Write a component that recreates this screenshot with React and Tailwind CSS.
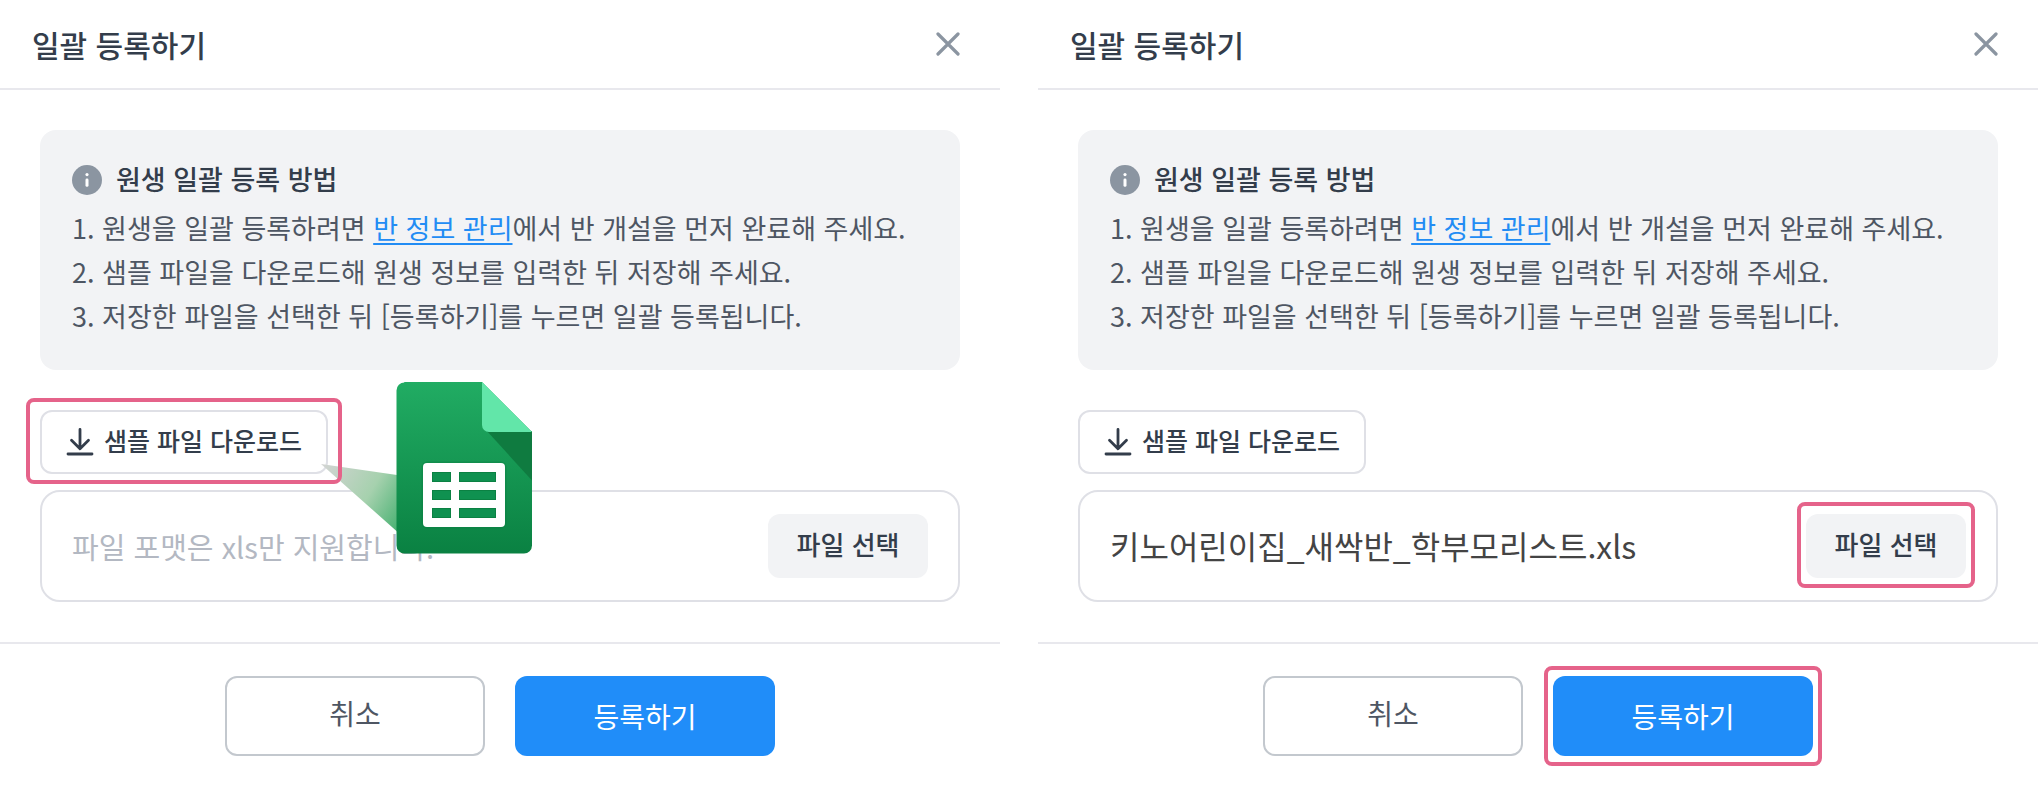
import { useState } from 'react';

const CloseIcon = () => (
    <svg width="24" height="24" viewBox="0 0 24 24" fill="none" stroke="#8b95a1" strokeWidth="3.2" strokeLinecap="round">
        <path d="M2 2l20 20M22 2L2 22" />
    </svg>
)

const InfoIcon = () => (
    <svg width="30" height="30" viewBox="0 0 30 30" className="shrink-0">
        <circle cx="15" cy="15" r="15" fill="#8b95a1" />
        <circle cx="15" cy="9.6" r="1.6" fill="#fff" />
        <rect x="13.5" y="13.6" width="3" height="8.2" rx="1.4" fill="#fff" />
    </svg>
)

const DownloadIcon = () => (
    <svg width="28" height="28" viewBox="0 0 28 28" fill="none" stroke="#333d4b" strokeWidth="2.8" strokeLinecap="round" strokeLinejoin="round">
        <path d="M14 1.5v19M5.5 12.2l8.500 8.600 8.500-8.600M2 26h24" />
    </svg>
)

// google sheets file with the pointer that grows out of the download button
const SheetsCallout = () => (
    <svg width="212" height="172" viewBox="0 0 212 172" className="absolute -top-7 left-[280px] pointer-events-none">
        <defs>
            <linearGradient id="pointer" x1="0" y1="82" x2="90" y2="136" gradientUnits="userSpaceOnUse">
                <stop offset="0" stopColor="#d4d4d4" />
                <stop offset="0.55" stopColor="#a6d1ae" />
                <stop offset="1" stopColor="#3fae6c" />
            </linearGradient>
            <linearGradient id="page" x1="0" y1="0" x2="0" y2="1">
                <stop offset="0" stopColor="#21ac63" />
                <stop offset="1" stopColor="#0a8142" />
            </linearGradient>
        </defs>
        <path d="M1 82L77 93V149.500Z" fill="url(#pointer)" />
        <path d="M84 0H162L212 50V163.500a8 8 0 0 1-8 8H84.500a8 8 0 0 1-8-8V8.500a8 8 0 0 1 8-8Z" fill="url(#page)" />
        <path d="M166 48L212 49V98.500Z" fill="#0f7b40" />
        <path d="M162 0L212 50H169a7 7 0 0 1-7-7Z" fill="#62e6a9" />
        <rect x="101.500" y="79.500" width="85" height="67" rx="6" fill="#0a7a40" opacity="0.35" />
        <rect x="103" y="81" width="82" height="64" rx="4" fill="#fff" />
        <g fill="#0f9150" stroke="#0b8143" strokeWidth="1">
            <rect x="112.500" y="90.500" width="18" height="9" />
            <rect x="139.500" y="90.500" width="36" height="9" />
            <rect x="112.500" y="108.500" width="18" height="9" />
            <rect x="139.500" y="108.500" width="36" height="9" />
            <rect x="112.500" y="126.500" width="18" height="9" />
            <rect x="139.500" y="126.500" width="36" height="9" />
        </g>
    </svg>
)

const Highlight = ({ className }) => (
    <span className={`absolute rounded-lg border-4 border-[#e5638a] pointer-events-none ${className}`}></span>
)

const RegisterModal = ({ defaultFile, step }) => {
    const [fileName, setFileName] = useState(defaultFile)

    return (
        <section className="flex flex-col bg-white">
            <header className="flex items-center justify-between h-[90px] pl-8 pr-10 border-b-2 border-[#e8e8ed]">
                <h2 className="text-[30px] leading-10 font-medium text-[#333d4b]">일괄 등록하기</h2>
                <button type="button" aria-label="닫기"><CloseIcon /></button>
            </header>

            <div className="flex flex-col px-10 py-10">
                <div className="min-h-60 rounded-2xl bg-[#f2f3f5] px-8 py-7 text-[27px] leading-[44px]">
                    <div className="flex items-center gap-[14px] h-11">
                        <InfoIcon />
                        <h3 className="pb-0.5 font-medium text-[#333d4b]">원생 일괄 등록 방법</h3>
                    </div>
                    <ol className="pt-1 text-[#4e5663]">
                        <li>1. 원생을 일괄 등록하려면 <a href="#" className="text-[#228cf4] underline decoration-2 underline-offset-4">반 정보 관리</a>에서 반 개설을 먼저 완료해 주세요.</li>
                        <li>2. 샘플 파일을 다운로드해 원생 정보를 입력한 뒤 저장해 주세요.</li>
                        <li>3. 저장한 파일을 선택한 뒤 [등록하기]를 누르면 일괄 등록됩니다.</li>
                    </ol>
                </div>

                <div className="relative z-10 mt-10 self-start">
                    <button type="button" className="flex items-center gap-[10px] h-16 w-72 pl-6 rounded-xl border-2 border-[#dfe0e6] text-[25px] font-medium text-[#333d4b] whitespace-nowrap">
                        <DownloadIcon />
                        <span className="pb-0.5">샘플 파일 다운로드</span>
                    </button>
                    {step === 1 && <SheetsCallout />}
                    {step === 1 && <Highlight className="-inset-x-[14px] -top-3 -bottom-[10px]" />}
                </div>

                <div className="mt-4 flex items-center h-28 px-[30px] rounded-[20px] border-2 border-[#dfe0e6]">
                    <input
                        type="text"
                        aria-label="파일 이름"
                        value={fileName}
                        onChange={(e) => setFileName(e.target.value)}
                        placeholder="파일 포맷은 xls만 지원합니다."
                        className="flex-1 min-w-0 h-14 pb-0.5 outline-none text-[32px] text-[#444444] placeholder:text-[29px] placeholder:text-[#b3b8c2]"
                    />
                    <div className="relative flex">
                        <button type="button" className="h-16 w-40 pb-1.5 rounded-xl bg-[#f2f3f5] text-[26px] font-medium text-[#333d4b]">파일 선택</button>
                        {step === 2 && <Highlight className="-inset-x-[9px] -top-3 -bottom-[10px]" />}
                    </div>
                </div>
            </div>

            <footer className="flex justify-center gap-[30px] pt-8 pb-10 border-t-2 border-[#e8e8ed] text-[28px]">
                <button type="button" className="h-20 w-[260px] pb-1.5 rounded-xl border-2 border-[#c3c8ce] text-[#4e5663]">취소</button>
                <div className="relative flex">
                    <button type="button" className="h-20 w-[260px] rounded-xl bg-[#208df9] text-white">등록하기</button>
                    {step === 2 && <Highlight className="-inset-x-[9px] -inset-y-[10px]" />}
                </div>
            </footer>
        </section>
    )
}

const App = () => {
    return (
        <main lang="ko" className="grid grid-cols-2 gap-[38px] bg-white font-['Noto_Sans_CJK_KR',sans-serif]">
            <RegisterModal defaultFile="" step={1} />
            <RegisterModal defaultFile="키노어린이집_새싹반_학부모리스트.xls" step={2} />
        </main>
    )
}

export default App;
